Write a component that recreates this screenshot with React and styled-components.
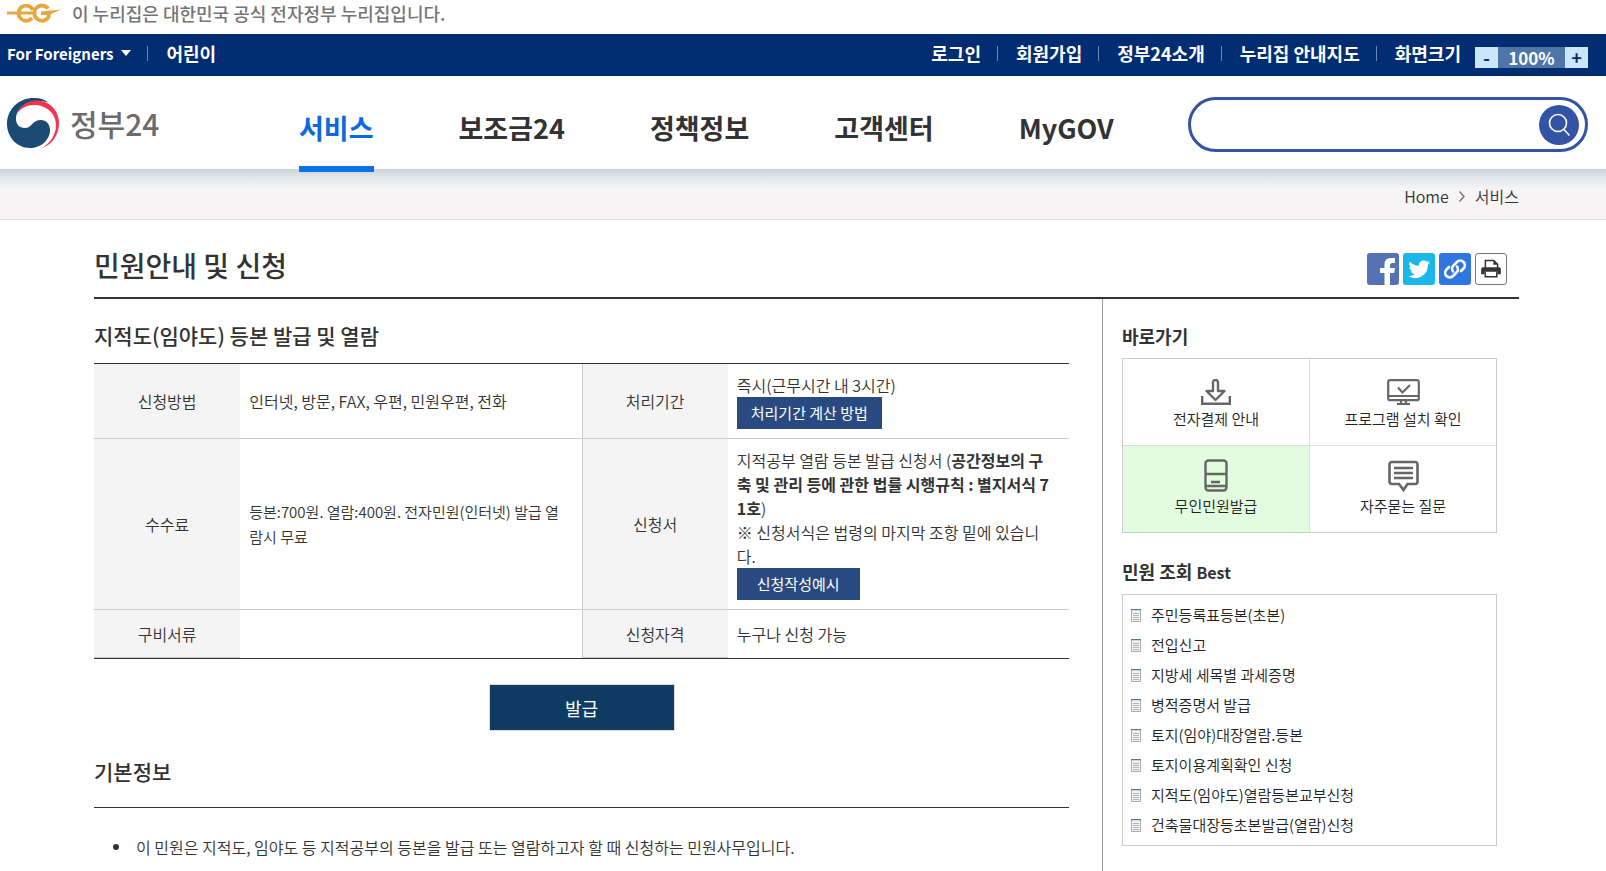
import React from 'react';
import styled, { createGlobalStyle } from 'styled-components';

const GlobalStyle = createGlobalStyle`
  * {
    box-sizing: border-box;
  }

  body {
    margin: 0;
    background: #fff;
    color: #333;
    font-family: 'Noto Sans CJK KR', 'Noto Sans', sans-serif;
    font-size: 16px;
    font-weight: 350;
    line-height: 24px;
  }

  h1, h2, h3, ul {
    margin: 0;
    padding: 0;
  }

  ul {
    list-style: none;
  }

  a {
    color: inherit;
    text-decoration: none;
  }

  button, input {
    font-family: inherit;
    padding: 0;
    border: none;
    cursor: pointer;
  }

  svg {
    display: block;
    flex: none;
  }
`;

const Page = styled.div`
  display: flex;
  flex-direction: column;
  min-height: 100vh;
`;

const Official = styled.div`
  display: flex;
  align-items: center;
  gap: 11px;
  height: 34px;
  padding: 0 7px 8px;
  font-size: 18px;
  font-weight: 500;
  color: #757575;
`;

const UtilBar = styled.div`
  display: flex;
  justify-content: space-between;
  height: 42px;
  padding: 0 18px 4px 7px;
  background: #032d72;
  color: #fff;
  font-size: 18px;
  font-weight: 700;
`;

const UtilList = styled.ul`
  display: flex;
  align-items: center;

  li {
    display: flex;
    align-items: center;
  }

  li + li::before {
    content: '';
    width: 1px;
    height: 15px;
    margin: 0 18px 0 16px;
    background: #6f88b3;
  }
`;

const Foreigners = styled.button`
  display: flex;
  align-items: center;
  gap: 8px;
  background: none;
  color: #fff;
  font-size: 15px;
  font-weight: 700;
`;

const Caret = styled.span`
  border: 5px solid transparent;
  border-top: 6px solid #fff;
  border-bottom: 0;
`;

const ZoomControl = styled.div`
  display: flex;
  height: 21px;
  margin: 8px 0 0 14px;
  line-height: 21px;
`;

const ZoomButton = styled.button`
  width: 23px;
  background: #cbe6f8;
  color: #032d72;
  font-size: 18px;
  font-weight: 700;
  line-height: 20px;
`;

const ZoomValue = styled.span`
  width: 67px;
  background: #4f75a8;
  font-size: 17px;
  text-align: center;
`;

// sits above the breadcrumb so the active tab's underline overlaps its shadow
const Header = styled.header`
  position: relative;
  z-index: 1;
  display: flex;
  height: 93px;
  padding: 0 18px 0 7px;
`;

const Brand = styled.a`
  display: flex;
  align-items: center;
  gap: 11px;
  width: 292px;
  color: #6b6b6b;
  font-size: 30px;
  font-weight: 500;
  line-height: 50px;
`;

const Nav = styled.nav`
  display: flex;
  gap: 85px;
`;

const NavLink = styled.a`
  height: 96px;
  padding-top: 32px;
  border-bottom: 6px solid ${props => props.$active ? '#0c70e6' : 'transparent'};
  color: ${props => props.$active ? '#0a69e0' : '#333'};
  font-size: 27px;
  font-weight: 700;
  line-height: 40px;
`;

const Search = styled.form`
  display: flex;
  align-items: center;
  width: 400px;
  height: 55px;
  margin: 21px 0 0 auto;
  padding: 0 6px 0 22px;
  border: 3px solid #3353a4;
  border-radius: 28px;
`;

const SearchInput = styled.input`
  flex: 1;
  min-width: 0;
  background: none;
  outline: none;
  font-size: 18px;
`;

const SearchButton = styled.button`
  display: flex;
  align-items: center;
  justify-content: center;
  width: 40px;
  height: 40px;
  border-radius: 50%;
  background: #3353a4;
`;

const Crumbs = styled.nav`
  display: flex;
  align-items: center;
  justify-content: flex-end;
  gap: 10px;
  height: 51px;
  padding: 4px 87px 0 94px;
  border-bottom: 1px solid #e4e3e4;
  background: linear-gradient(#cad3df, #e3e6eb 8px, #f6f4f5 20px);
`;

const Container = styled.main`
  flex: 1;
  display: flex;
  flex-direction: column;
  padding: 0 87px 0 94px;
`;

const TitleRow = styled.div`
  display: flex;
  align-items: flex-end;
  justify-content: space-between;
  height: 79px;
  padding: 0 12px 12px 0;
  border-bottom: 2px solid #333;
`;

const Title = styled.h1`
  font-size: 28px;
  font-weight: 500;
  line-height: 40px;
`;

const Share = styled.div`
  display: flex;
  gap: 4px;
`;

const ShareButton = styled.button`
  width: 32px;
  height: 32px;
  overflow: hidden;
  border: ${props => props.$outline ? '1px solid #777' : 'none'};
  border-radius: 3px;
  background: ${props => props.$color};

  svg {
    width: 100%;
    height: 100%;
  }
`;

const Columns = styled.div`
  flex: 1;
  display: grid;
  grid-template-columns: minmax(0, 1fr) 417px;
`;

const Content = styled.section`
  padding: 20px 33px 0 0;
`;

const SubTitle = styled.h2`
  font-size: 21px;
  font-weight: 500;
  line-height: 32px;
`;

const InfoTable = styled.table`
  width: 100%;
  margin-top: 12px;
  table-layout: fixed;
  border-collapse: separate;
  border-spacing: 0;
  border-top: 1px solid #333;
  border-bottom: 1px solid #333;

  th {
    width: 15%;
    padding: 0;
    background: #f4f4f4;
    font-weight: inherit;
  }

  td {
    padding: 9px 0 9px 9px;
    white-space: nowrap;
  }

  tr + tr > * {
    border-top: 1px solid #ccc;
  }

  td + th {
    border-left: 1px solid #ccc;
  }

  tr:last-child th {
    height: 49px;
    border-bottom: 1px solid #ccc;
  }
`;

const Fee = styled.span`
  font-size: 15px;
`;

const TableButton = styled.button`
  display: block;
  height: 32px;
  padding: 0 ${props => props.$wide ? 20 : 14}px 2px;
  background: #284a80;
  color: #fff;
  font-size: 15px;
`;

const IssueButton = styled.button`
  display: block;
  width: 186px;
  height: 47px;
  margin: 25px auto 24px;
  border: 1px solid #ddd;
  background: #0f3b63;
  color: #fff;
  font-size: 18px;
`;

const Notes = styled.ul`
  margin-top: 20px;
  padding: 27px 0 0 19px;
  border-top: 1px solid #333;

  li {
    display: flex;
    align-items: center;
    gap: 17px;
  }

  li::before {
    content: '';
    width: 6px;
    height: 6px;
    border-radius: 50%;
    background: #333;
  }
`;

const Aside = styled.aside`
  padding: 25px 22px 0 19px;
  border-left: 1px solid #999;
`;

const AsideTitle = styled.h3`
  font-size: 18px;
  font-weight: 700;
  line-height: 24px;

  small {
    font-size: 16px;
  }
`;

const QuickGrid = styled.div`
  display: grid;
  grid-template-columns: 1fr 1fr;
  gap: 1px;
  margin: 10px 0 26px;
  border: 1px solid #ccc;
  background: #ddd;
`;

const QuickLink = styled.a`
  display: flex;
  flex-direction: column;
  align-items: center;
  justify-content: flex-end;
  gap: 2px;
  height: 86px;
  padding-bottom: 14px;
  background: ${props => props.$active ? '#e2fcdf' : '#fff'};
  color: #222;
  font-size: 15px;
`;

const BestList = styled.ul`
  margin-top: 10px;
  padding: 5px 8px;
  border: 1px solid #ccc;
  color: #222;
  font-size: 15px;
  line-height: 30px;

  a {
    display: flex;
    align-items: center;
    gap: 10px;
  }
`;

const quickIcons = {
  download: (
    <svg width="30" height="26" viewBox="0 0 30 26" fill="none" stroke="#666" strokeWidth="2.400">
      <path d="M1.200 17v7.800h27.600V17"/>
      <path d="M12 12V3.500a2.500 2.500 0 0 1 5 0V12h6.500L14.500 21 5.500 12z" strokeLinejoin="round"/>
    </svg>
  ),
  monitor: (
    <svg width="33" height="26" viewBox="0 0 33 26" fill="none" stroke="#666" strokeWidth="2.200">
      <rect x="1.200" y="1.200" width="30.600" height="20" rx="2"/>
      <path d="M1 17h31M14 21v4M19 21v4M10 25h13M11 8.500l4.500 5 7.500-7.500"/>
    </svg>
  ),
  kiosk: (
    <svg width="24" height="33" viewBox="0 0 24 33" fill="none" stroke="#666" strokeWidth="2.400">
      <rect x="1.500" y="1.500" width="21" height="30" rx="3"/>
      <path d="M2 15h20M7 23h9M2 27h20"/>
    </svg>
  ),
  chat: (
    <svg width="31" height="32" viewBox="0 0 31 32" fill="none" stroke="#666" strokeWidth="2.600">
      <path d="M4 2h23a2.500 2.500 0 0 1 2.500 2.500v17A2.500 2.500 0 0 1 27 24h-7.500L15.500 30 11 24H4a2.500 2.500 0 0 1-2.500-2.500v-17A2.500 2.500 0 0 1 4 2z"/>
      <path d="M6 8h19M6 13h19M6 18h19"/>
    </svg>
  )
};

const quickLinks = [
  { icon: 'download', label: '전자결제 안내' },
  { icon: 'monitor', label: '프로그램 설치 확인' },
  { icon: 'kiosk', label: '무인민원발급', active: true },
  { icon: 'chat', label: '자주묻는 질문' }
];

const bestItems = [
  '주민등록표등본(초본)',
  '전입신고',
  '지방세 세목별 과세증명',
  '병적증명서 발급',
  '토지(임야)대장열람.등본',
  '토지이용계획확인 신청',
  '지적도(임야도)열람등본교부신청',
  '건축물대장등초본발급(열람)신청'
];

const navItems = ['서비스', '보조금24', '정책정보', '고객센터', 'MyGOV'];

function EgMark() {
  return (
    <svg width="54" height="20" viewBox="0 0 54 20" fill="none" stroke="#e9a83f" strokeWidth="3.800">
      <path d="M0 10h26" strokeWidth="3"/>
      <path d="M26 7A7.600 7.600 0 1 0 25 15"/>
      <path d="M41 5.500A7.600 7.600 0 1 0 41.500 14l.5-3.500"/>
      <path d="M34 8.400L54 6.500 42 12H34z" fill="#e9a83f" stroke="none"/>
    </svg>
  );
}

function Taegeuk() {
  return (
    <svg width="52" height="50" viewBox="0 0 52 50">
      <path d="M42 5C36 0 28-1 21 .5 9 3 0 13 0 26c0 13 10 24 23 24 11 0 20-8 20-18 0-6-4-10-9-10-9 0-9 8-16 8-6 0-9-4-9-9C9 10 20 3 31 3c4 0 8 .5 11 2z" fill="#1b4b72"/>
      <path d="M9.500 17C13 6 24 1 34 3c11 2 18 11 18 22 0 13-8 22-17 25 8-5 14-13 14-23C49 15 39 7 27 7 20 7 13 10 9.500 17z" fill="#f5334f"/>
    </svg>
  );
}

function DocIcon() {
  return (
    <svg width="10" height="13" viewBox="0 0 10 13">
      <path d="M.5.500h9v12h-9z" fill="#f4f4f4" stroke="#aaa"/>
      <path d="M0 .5h10" stroke="#5a7898" strokeWidth="1.500"/>
      <path d="M2 4.500h6M2 6.500h6M2 8.500h6M2 10.500h6" stroke="#b5b5b5"/>
    </svg>
  );
}

function ShareButtons() {
  return (
    <Share>
      <ShareButton $color="#5572b4" aria-label="facebook">
        <svg viewBox="0 0 32 32">
          <path d="M17.500 32V20H13v-5h4.500v-3.500c0-4.500 2.500-6.500 6.500-6.500h4v5h-2.500c-2 0-2.500 1-2.500 2.500V15h5l-.8 5H23v12z" fill="#fff"/>
        </svg>
      </ShareButton>
      <ShareButton $color="#1bb7ea" aria-label="twitter">
        <svg viewBox="0 0 32 32">
          <path d="M27 9.500a9 9 0 0 1-2.500.7 4.300 4.300 0 0 0 1.900-2.400 8 8 0 0 1-2.700 1 4.400 4.400 0 0 0-7.500 4A12.400 12.400 0 0 1 7 8.400a4.400 4.400 0 0 0 1.400 5.800c-.7 0-1.400-.2-2-.5a4.400 4.400 0 0 0 3.500 4.300c-.6.200-1.300.2-2 .1a4.400 4.400 0 0 0 4.100 3A9 9 0 0 1 5.500 23 12.500 12.500 0 0 0 24.800 11.700 9 9 0 0 0 27 9.500z" fill="#fff"/>
        </svg>
      </ShareButton>
      <ShareButton $color="#2f76e3" aria-label="링크 복사">
        <svg viewBox="0 0 32 32" fill="none" stroke="#fff" strokeWidth="2.600" strokeLinecap="round">
          <path d="M14 18.500a4.500 4.500 0 0 1 .5-6l3.500-3.500a4.500 4.500 0 0 1 6.500 6.500L22 18"/>
          <path d="M18 13.500a4.500 4.500 0 0 1-.5 6L14 23a4.500 4.500 0 0 1-6.500-6.500L10 14"/>
        </svg>
      </ShareButton>
      <ShareButton $color="#fff" $outline aria-label="인쇄">
        <svg viewBox="0 0 32 32">
          <path d="M10 15V7h9l4 4v4" fill="none" stroke="#333" strokeWidth="1.600"/>
          <path d="M18.500 7v4.500H23z" fill="#333"/>
          <path d="M7.500 14h17a2 2 0 0 1 2 2v5.500h-3.500V19H9v2.500H5.500V16a2 2 0 0 1 2-2z" fill="#333"/>
          <path d="M9.800 19v5.200h12.400V19" fill="none" stroke="#333" strokeWidth="1.600"/>
        </svg>
      </ShareButton>
    </Share>
  );
}

function App() {
  return (
    <Page>
      <GlobalStyle/>
      <Official>
        <EgMark/>
        이 누리집은 대한민국 공식 전자정부 누리집입니다.
      </Official>
      <UtilBar>
        <UtilList>
          <li><Foreigners>For Foreigners <Caret/></Foreigners></li>
          <li><a href="#kids">어린이</a></li>
        </UtilList>
        <UtilList>
          <li><a href="#login">로그인</a></li>
          <li><a href="#join">회원가입</a></li>
          <li><a href="#about">정부24소개</a></li>
          <li><a href="#sitemap">누리집 안내지도</a></li>
          <li>
            화면크기
            <ZoomControl>
              <ZoomButton aria-label="축소">-</ZoomButton>
              <ZoomValue>100%</ZoomValue>
              <ZoomButton aria-label="확대">+</ZoomButton>
            </ZoomControl>
          </li>
        </UtilList>
      </UtilBar>
      <Header>
        <Brand href="#home"><Taegeuk/>정부24</Brand>
        <Nav>
          {navItems.map((item, i) => (
            <NavLink key={item} href="#menu" $active={i === 0}>{item}</NavLink>
          ))}
        </Nav>
        <Search onSubmit={e => e.preventDefault()}>
          <SearchInput type="text" aria-label="검색어"/>
          <SearchButton aria-label="검색">
            <svg width="24" height="24" viewBox="0 0 24 24" fill="none" stroke="#fff" strokeWidth="1.600" strokeLinecap="round">
              <circle cx="11" cy="10" r="8.500"/>
              <path d="M17 16.500l5 5.500"/>
            </svg>
          </SearchButton>
        </Search>
      </Header>
      <Crumbs>
        <a href="#home">Home</a>
        <svg width="6" height="11" viewBox="0 0 6 11" fill="none" stroke="#777" strokeWidth="1.500">
          <path d="M.5.500L5 5.500.5 10.500"/>
        </svg>
        <a href="#service">서비스</a>
      </Crumbs>
      <Container>
        <TitleRow>
          <Title>민원안내 및 신청</Title>
          <ShareButtons/>
        </TitleRow>
        <Columns>
          <Content>
            <SubTitle>지적도(임야도) 등본 발급 및 열람</SubTitle>
            <InfoTable>
              <tbody>
                <tr>
                  <th scope="row">신청방법</th>
                  <td>인터넷, 방문, FAX, 우편, 민원우편, 전화</td>
                  <th scope="row">처리기간</th>
                  <td>
                    즉시(근무시간 내 3시간)
                    <TableButton>처리기간 계산 방법</TableButton>
                  </td>
                </tr>
                <tr>
                  <th scope="row">수수료</th>
                  <td><Fee>등본:700원. 열람:400원. 전자민원(인터넷) 발급 열<br/>람시 무료</Fee></td>
                  <th scope="row">신청서</th>
                  <td>
                    지적공부 열람 등본 발급 신청서 (<b>공간정보의 구<br/>
                    축 및 관리 등에 관한 법률 시행규칙 : 별지서식 7<br/>
                    1호</b>)<br/>
                    ※ 신청서식은 법령의 마지막 조항 밑에 있습니<br/>
                    다.
                    <TableButton $wide>신청작성예시</TableButton>
                  </td>
                </tr>
                <tr>
                  <th scope="row">구비서류</th>
                  <td/>
                  <th scope="row">신청자격</th>
                  <td>누구나 신청 가능</td>
                </tr>
              </tbody>
            </InfoTable>
            <IssueButton>발급</IssueButton>
            <SubTitle>기본정보</SubTitle>
            <Notes>
              <li>이 민원은 지적도, 임야도 등 지적공부의 등본을 발급 또는 열람하고자 할 때 신청하는 민원사무입니다.</li>
            </Notes>
          </Content>
          <Aside>
            <AsideTitle>바로가기</AsideTitle>
            <QuickGrid>
              {quickLinks.map(link => (
                <QuickLink key={link.icon} href="#quick" $active={link.active}>
                  {quickIcons[link.icon]}
                  {link.label}
                </QuickLink>
              ))}
            </QuickGrid>
            <AsideTitle>민원 조회 <small>Best</small></AsideTitle>
            <BestList>
              {bestItems.map(item => (
                <li key={item}><a href="#best"><DocIcon/>{item}</a></li>
              ))}
            </BestList>
          </Aside>
        </Columns>
      </Container>
    </Page>
  );
}

export default App;
